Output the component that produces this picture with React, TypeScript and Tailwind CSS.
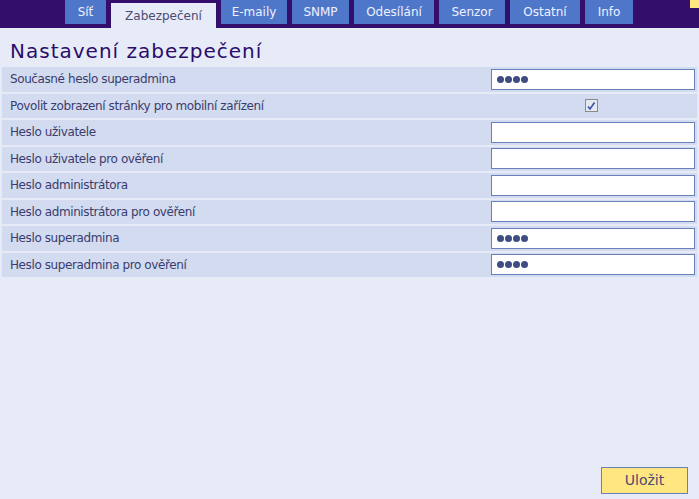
import React from 'react';

const tabs: { name: string; w: string }[] = [
  { name: 'Síť', w: 'w-[41px]' },
  { name: 'Zabezpečení', w: 'w-[105px]' },
  { name: 'E-maily', w: 'w-[66px]' },
  { name: 'SNMP', w: 'w-[57px]' },
  { name: 'Odesílání', w: 'w-[80px]' },
  { name: 'Senzor', w: 'w-[66px]' },
  { name: 'Ostatní', w: 'w-[70px]' },
  { name: 'Info', w: 'w-[48px]' },
];

type Row = { label: string; kind: 'input' | 'check'; dots?: number };

const rows: Row[] = [
  { label: 'Současné heslo superadmina', kind: 'input', dots: 4 },
  { label: 'Povolit zobrazení stránky pro mobilní zařízení', kind: 'check' },
  { label: 'Heslo uživatele', kind: 'input' },
  { label: 'Heslo uživatele pro ověření', kind: 'input' },
  { label: 'Heslo administrátora', kind: 'input' },
  { label: 'Heslo administrátora pro ověření', kind: 'input' },
  { label: 'Heslo superadmina', kind: 'input', dots: 4 },
  { label: 'Heslo superadmina pro ověření', kind: 'input', dots: 4 },
];

const App: React.FC = () => {
  return (
    <div className="w-[699px] h-[499px] flex flex-col bg-[#e7ebf7] font-['DejaVu_Sans',sans-serif] overflow-hidden">
      {/* top tab bar */}
      <div className="relative h-[28px] bg-[#330e6b] flex items-start pl-[65px] gap-[5px] shrink-0">
        {tabs.map(t =>
          t.name === 'Zabezpečení' ? (
            <div
              key={t.name}
              className={`${t.w} mt-[3px] h-[25px] bg-[#e7ebf7] text-[#4a4a72] text-[12px] flex items-center justify-center`}
            >
              {t.name}
            </div>
          ) : (
            <div
              key={t.name}
              className={`${t.w} h-[24px] bg-[#4f77c9] text-[#eef1ff] text-[12px] flex items-center justify-center`}
            >
              {t.name}
            </div>
          )
        )}
        <div className="absolute right-0 top-0 w-[9px] h-[8px] bg-[#ffe680]" />
      </div>

      <div className="flex-1 flex flex-col px-[2px]">
        <h1 className="pl-[8px] pt-[10px] h-[39px] text-[20px] leading-[26px] tracking-[1px] text-[#2b0c6b]">
          Nastavení zabezpečení
        </h1>

        <div className="flex flex-col gap-[2px]">
          {rows.map(r => (
            <div key={r.label} className="h-[24.5px] bg-[#d2dbef] flex items-center">
              <span className="flex-1 pl-[8px] text-[12px] tracking-[-0.4px] text-[#3b3b6e]">{r.label}</span>
              {r.kind === 'input' ? (
                <div className="w-[204px] h-[21px] mr-[2px] bg-white border border-[#6b80b9] flex items-center gap-[1px] pl-[5px]">
                  {Array.from({ length: r.dots ?? 0 }).map((_, i) => (
                    <span key={i} className="w-[7px] h-[7px] rounded-full bg-[#3d4d82]" />
                  ))}
                </div>
              ) : (
                <div className="w-[204px] mr-[2px] flex justify-center pr-[4px]">
                  <div className="w-[13px] h-[13px] border border-[#8a8a8a] bg-[#e4e8f0] flex items-center justify-center">
                    <svg width="10" height="10" viewBox="0 0 10 10">
                      <path d="M2 5.5 L4 8 L8.5 1.5" stroke="#3a4fa8" strokeWidth="1.6" fill="none" />
                    </svg>
                  </div>
                </div>
              )}
            </div>
          ))}
        </div>

        <div className="flex-1" />
        <div className="flex justify-end pr-[9px] pb-[5px]">
          <button className="w-[87px] h-[27px] bg-[#ffe680] border border-[#6b80b9] text-[14px] text-[#4a4a72]">
            Uložit
          </button>
        </div>
      </div>
    </div>
  );
};

export default App;
